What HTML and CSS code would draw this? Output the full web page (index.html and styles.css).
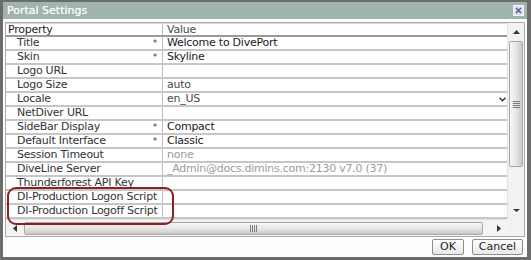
FILE: index.html
```html
<!DOCTYPE html>
<html lang="en">
<head>
    <meta charset="UTF-8">
    <title>Portal Settings</title>
    <link rel="stylesheet" href="styles.css">
</head>
<body>
    <div class="dialog">
        <div class="titlebar">
            <span class="title">Portal Settings</span>
            <svg class="close" width="11" height="11" viewBox="0 0 11 11">
                <rect x="0.5" y="0.5" width="10" height="10" fill="#dbe3f1" stroke="#f4f6fb"/>
                <path d="M3 3 L8 8 M8 3 L3 8" stroke="#4d6296" stroke-width="1.6"/>
            </svg>
        </div>

        <div class="content">
            <div class="grid">
                <div class="table">
                    <div class="row head">
                        <div class="prop">Property</div>
                        <div class="val">Value</div>
                    </div>
                    <div class="row">
                        <div class="prop"><span>Title</span><span class="req">*</span></div>
                        <div class="val strong">Welcome to DivePort</div>
                    </div>
                    <div class="row">
                        <div class="prop"><span>Skin</span><span class="req">*</span></div>
                        <div class="val strong">Skyline</div>
                    </div>
                    <div class="row">
                        <div class="prop"><span>Logo URL</span></div>
                        <div class="val"></div>
                    </div>
                    <div class="row">
                        <div class="prop"><span>Logo Size</span></div>
                        <div class="val">auto</div>
                    </div>
                    <div class="row">
                        <div class="prop"><span>Locale</span></div>
                        <div class="val">
                            <span>en_US</span>
                            <svg class="chevron" width="7" height="5" viewBox="0 0 7 5">
                                <path d="M0.5 0.8 L3.5 3.8 L6.5 0.8" fill="none" stroke="#333" stroke-width="1.4"/>
                            </svg>
                        </div>
                    </div>
                    <div class="row">
                        <div class="prop"><span>NetDiver URL</span></div>
                        <div class="val"></div>
                    </div>
                    <div class="row">
                        <div class="prop"><span>SideBar Display</span><span class="req">*</span></div>
                        <div class="val strong">Compact</div>
                    </div>
                    <div class="row">
                        <div class="prop"><span>Default Interface</span><span class="req">*</span></div>
                        <div class="val strong">Classic</div>
                    </div>
                    <div class="row">
                        <div class="prop"><span>Session Timeout</span></div>
                        <div class="val muted">none</div>
                    </div>
                    <div class="row">
                        <div class="prop"><span>DiveLine Server</span></div>
                        <div class="val muted">_Admin@docs.dimins.com:2130 v7.0 (37)</div>
                    </div>
                    <div class="row">
                        <div class="prop"><span>Thunderforest API Key</span></div>
                        <div class="val"></div>
                    </div>
                    <div class="row">
                        <div class="prop"><span>DI-Production Logon Script</span></div>
                        <div class="val"></div>
                    </div>
                    <div class="row">
                        <div class="prop"><span>DI-Production Logoff Script</span></div>
                        <div class="val"></div>
                    </div>
                </div>

                <div class="vscroll">
                    <div class="arrow">
                        <svg width="7" height="4" viewBox="0 0 7 4"><path d="M0 4 L3.5 0 L7 4 Z" fill="#333"/></svg>
                    </div>
                    <div class="vthumb">
                        <span class="grip-h"></span>
                    </div>
                    <div class="spacer"></div>
                    <div class="arrow">
                        <svg width="7" height="4" viewBox="0 0 7 4"><path d="M0 0 L7 0 L3.5 3 Z" fill="#333"/></svg>
                    </div>
                </div>

                <div class="hscroll">
                    <div class="arrow">
                        <svg width="4" height="7" viewBox="0 0 4 7"><path d="M4 0 L4 7 L0 3.5 Z" fill="#333"/></svg>
                    </div>
                    <div class="hthumb">
                        <span class="grip-v"></span>
                    </div>
                    <div class="spacer"></div>
                    <div class="arrow">
                        <svg width="4" height="7" viewBox="0 0 4 7"><path d="M0 0 L4 3.5 L0 7 Z" fill="#333"/></svg>
                    </div>
                </div>
                <div class="corner"></div>

                <!-- annotation -->
                <div class="highlight"></div>
            </div>

            <div class="footer">
                <button class="btn ok">OK</button>
                <button class="btn cancel">Cancel</button>
            </div>
        </div>
    </div>
</body>
</html>
```

FILE: styles.css
```css
* {
    margin: 0;
    padding: 0;
    box-sizing: border-box;
}

body {
    margin: 0;
    background-color: #fff;
    font-family: "DejaVu Sans", Verdana, sans-serif;
    font-size: 11px;
    letter-spacing: -0.25px;
}

.dialog {
    width: 531px;
    height: 260px;
    display: flex;
    flex-direction: column;
    border-style: solid;
    border-color: #6c6c6c;
    border-width: 2px 4px 3px 3px;
    background-color: #fdfdfd;
}

.titlebar {
    height: 17px;
    flex: none;
    display: flex;
    align-items: center;
    justify-content: space-between;
    padding: 0 3px 0 4px;
    background-color: #a1b3ae;
    color: #fff;
}

.title {
    letter-spacing: 0;
    text-shadow: 0 0 1px rgba(255,255,255,0.6);
}

.close {
    display: block;
}

.content {
    flex: 1;
    display: flex;
    flex-direction: column;
    padding: 3px 2px 0 2px;
}

.grid {
    position: relative;
    display: grid;
    grid-template-columns: 501px 17px;
    grid-template-rows: 196px 17px;
    border: 1px solid #a9a9a9;
    background-color: #fff;
}

.table {
    overflow: hidden;
}

.row {
    display: flex;
    height: 14px;
    border-bottom: 2px solid #c6c6c6;
    line-height: 12px;
    color: #333;
}

.row.head {
    border-top: 1px solid #dcdcdc;
    border-bottom-color: #9a9a9a;
    color: #1e1e1e;
}

.prop {
    width: 157px;
    flex: none;
    display: flex;
    justify-content: space-between;
    padding: 0 5px 0 11px;
    border-right: 1px solid #bdbdbd;
    white-space: nowrap;
}

.head .prop {
    padding-left: 2px;
}

.req {
    font-size: 9px;
    color: #444;
}

.val {
    flex: 1;
    display: flex;
    justify-content: space-between;
    align-items: center;
    padding: 0 1px 0 4px;
    white-space: nowrap;
    color: #4a4a4a;
}

.val.strong {
    color: #1a1a24;
}

.val.muted {
    color: #9c9c9c;
}

.chevron {
    display: block;
}

.vscroll {
    grid-row: 1;
    grid-column: 2;
    display: flex;
    flex-direction: column;
    background-color: #f2f2f2;
    border-left: 1px solid #e2e2e2;
}

.vscroll .arrow {
    height: 17px;
    flex: none;
    display: flex;
    align-items: center;
    justify-content: center;
}

.vthumb {
    height: 126px;
    margin: 1px 1px 0 1px;
    flex: none;
    display: flex;
    align-items: center;
    justify-content: center;
    border: 1px solid #a8a8a8;
    border-radius: 2px;
    background: linear-gradient(to right, #f7f7f7, #e4e4e4 55%, #c8c8c8);
}

.grip-h {
    width: 7px;
    height: 7px;
    background: repeating-linear-gradient(to bottom, #7d7d7d 0 1px, transparent 1px 2px);
}

.spacer {
    flex: 1;
}

.hscroll {
    grid-row: 2;
    grid-column: 1;
    display: flex;
    background-color: #f4f4f4;
    border-top: 1px solid #e2e2e2;
}

.hscroll .arrow {
    width: 17px;
    flex: none;
    display: flex;
    align-items: center;
    justify-content: center;
}

.hthumb {
    width: 459px;
    margin: 2px 0 1px 1px;
    flex: none;
    display: flex;
    align-items: center;
    justify-content: center;
    border: 1px solid #a8a8a8;
    border-radius: 2px;
    background: linear-gradient(to bottom, #f7f7f7, #e4e4e4 55%, #c8c8c8);
}

.grip-v {
    width: 7px;
    height: 7px;
    background: repeating-linear-gradient(to right, #7d7d7d 0 1px, transparent 1px 2px);
}

.corner {
    grid-row: 2;
    grid-column: 2;
    background-color: #f2f2f2;
}

.highlight {
    position: absolute;
    left: 1px;
    top: 164px;
    width: 167px;
    height: 38px;
    border: 2px solid #8c2020;
    border-radius: 9px;
    pointer-events: none;
}

.footer {
    flex: 1;
    display: flex;
    justify-content: flex-end;
    align-items: flex-start;
    gap: 8px;
    padding: 2px 2px 0 0;
}

.btn {
    height: 16px;
    font-family: "DejaVu Sans", Verdana, sans-serif;
    font-size: 11px;
    letter-spacing: 0;
    line-height: 14px;
    color: #222;
    border: 1px solid #8e8e8e;
    border-radius: 2px;
    background: linear-gradient(to bottom, #ffffff, #e9e9e9);
}

.ok {
    width: 32px;
}

.cancel {
    width: 51px;
}
```
